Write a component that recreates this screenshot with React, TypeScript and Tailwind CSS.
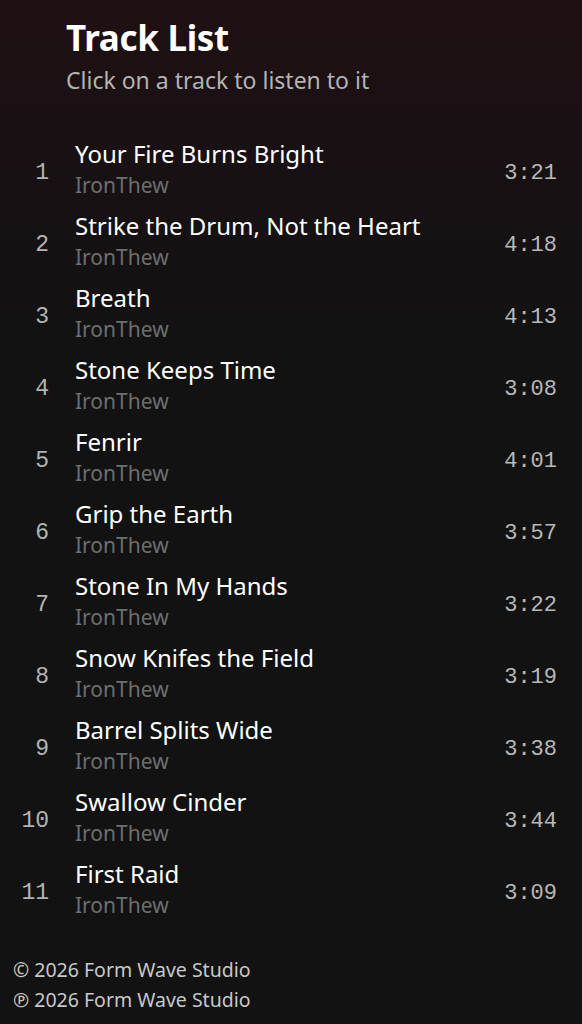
import React from "react";

const tracks = [
  ["Your Fire Burns Bright", "3:21"],
  ["Strike the Drum, Not the Heart", "4:18"],
  ["Breath", "4:13"],
  ["Stone Keeps Time", "3:08"],
  ["Fenrir", "4:01"],
  ["Grip the Earth", "3:57"],
  ["Stone In My Hands", "3:22"],
  ["Snow Knifes the Field", "3:19"],
  ["Barrel Splits Wide", "3:38"],
  ["Swallow Cinder", "3:44"],
  ["First Raid", "3:09"],
];

const mono = { fontFamily: '"Liberation Mono", monospace' };

export default function App() {
  return (
    <div
      className="w-[582px] h-[1024px] overflow-hidden bg-[linear-gradient(to_bottom,#1f1013_0px,#171113_200px,#121212_360px)] text-white"
      style={{ fontFamily: '"Noto Sans", Inter, sans-serif' }}
    >
      <div className="pl-[66px] pt-[14px]">
        <h1 className="text-[35px] leading-[48px] font-bold tracking-[-0.3px]">Track List</h1>
        <p className="text-[23px] leading-[30px] text-[#b3b3b3] mt-[3px]">Click on a track to listen to it</p>
      </div>
      <div className="mt-[36px] flex flex-col">
        {tracks.map(([title, dur], i) => (
          <div key={i} className="flex items-center h-[72px] pr-[25px]">
            <div className="w-[49px] text-right text-[23px] text-[#b3b3b3] mt-[13px]" style={mono}>
              {i + 1}
            </div>
            <div className="flex-1 pl-[26px] mt-[2px] flex flex-col">
              <div className="text-[24px] leading-[32px] pt-[1px] text-white">{title}</div>
              <div className="text-[21px] leading-[30px] text-[#6e6e6e]">IronThew</div>
            </div>
            <div className="text-[22px] text-[#b8b8b8] mt-[12px]" style={mono}>
              {dur}
            </div>
          </div>
        ))}
      </div>
      <div className="mt-[32px] pl-[13px] text-[19.5px] leading-[30px] text-[#c8c8c8]">
        <div>© 2026 Form Wave Studio</div>
        <div>℗ 2026 Form Wave Studio</div>
      </div>
    </div>
  );
}
